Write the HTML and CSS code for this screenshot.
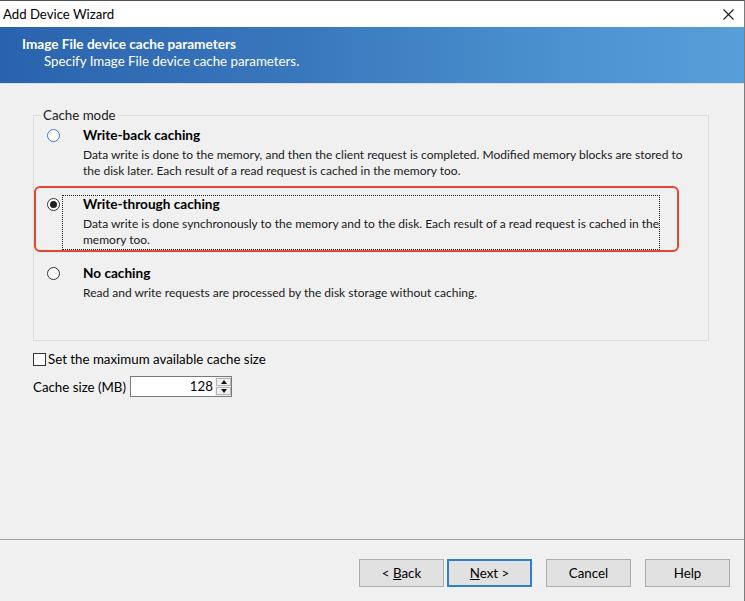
FILE: index.html
```html
<!DOCTYPE html>
<html lang="en">
  <head>
    <meta charset="UTF-8" />
    <meta name="viewport" content="width=device-width, initial-scale=1.0" />
    <title>Add Device Wizard</title>
    <link rel="stylesheet" href="styles.css">
  </head>

  <body>
    <div class="window">
      <div class="titlebar">
        <span class="title">Add Device Wizard</span>
        <svg class="close" width="11" height="11" viewBox="0 0 11 11">
          <path d="M0.5 0.5 L10.5 10.5 M10.5 0.5 L0.5 10.5" stroke="#1a1a1a" stroke-width="1.1" fill="none" />
        </svg>
      </div>

      <div class="header">
        <div class="header-title">Image File device cache parameters</div>
        <div class="header-sub">Specify Image File device cache parameters.</div>
      </div>

      <div class="main">
        <fieldset class="group">
          <legend>Cache mode</legend>

          <div class="option">
            <span class="radio radio-hover"></span>
            <div class="option-body">
              <div class="option-title">Write-back caching</div>
              <div class="option-desc">Data write is done to the memory, and then the client request is completed. Modified memory blocks are stored to<br>the disk later. Each result of a read request is cached in the memory too.</div>
            </div>
          </div>

          <div class="option option-selected">
            <span class="highlight"></span>
            <span class="radio checked"></span>
            <div class="option-body focused">
              <div class="option-title">Write-through caching</div>
              <div class="option-desc">Data write is done synchronously to the memory and to the disk. Each result of a read request is cached in the<br>memory too.</div>
            </div>
          </div>

          <div class="option">
            <span class="radio"></span>
            <div class="option-body">
              <div class="option-title">No caching</div>
              <div class="option-desc">Read and write requests are processed by the disk storage without caching.</div>
            </div>
          </div>
        </fieldset>

        <label class="check-row">
          <span class="checkbox"></span>
          <span>Set the maximum available cache size</span>
        </label>

        <div class="size-row">
          <span>Cache size (MB)</span>
          <div class="spin">
            <div class="spin-value">128</div>
            <div class="spin-buttons">
              <span class="spin-btn"><span class="arrow-up"></span></span>
              <span class="spin-btn"><span class="arrow-down"></span></span>
            </div>
          </div>
        </div>
      </div>

      <div class="footer">
        <button class="btn">&lt; <u>B</u>ack</button>
        <button class="btn btn-default"><u>N</u>ext &gt;</button>
        <button class="btn btn-gap">Cancel</button>
        <button class="btn btn-gap">Help</button>
      </div>
    </div>
  </body>
</html>
```

FILE: styles.css
```css
* {
  margin: 0;
  padding: 0;
  box-sizing: border-box;
}

body {
  font-family: "Lato", "Liberation Sans", sans-serif;
  font-size: 13.3px;
  color: #000;
  background-color: #f0f0f0;
}

.window {
  width: 745px;
  height: 601px;
  display: flex;
  flex-direction: column;
  border-top: 1px solid #505050;
  border-right: 1px solid #7c7c7c;
  background-color: #f0f0f0;
}

.titlebar {
  height: 26px;
  background-color: #fff;
  display: flex;
  align-items: center;
  justify-content: space-between;
  padding: 0 10px 0 3px;
}

.title {
  font-size: 13.2px;
}

.close {
  display: block;
}

.header {
  height: 57px;
  padding: 9px 0 0 22px;
  color: #fff;
  background: linear-gradient(to right, #2a63ad 0%, #3977bd 40%, #4d95d1 80%, #569fd8 100%);
  border-bottom: 1px solid #d7dfe8;
}

.header-title {
  font-weight: bold;
  font-size: 13.6px;
  line-height: 17px;
}

.header-sub {
  line-height: 17px;
  padding-left: 22px;
}

.main {
  flex: 1;
  padding: 23px 35px 0 33px;
}

.group {
  border: 1px solid #dcdcdc;
  padding: 3px 0 37px 0;
}

.group legend {
  margin-left: 7px;
  padding: 0 2px;
  line-height: 16px;
  color: #1a1a1a;
}

.option {
  position: relative;
  display: flex;
  align-items: flex-start;
  margin-bottom: 14px;
}

.option:last-child {
  margin-bottom: 0;
}

.radio {
  width: 13px;
  height: 13px;
  margin: 3px 2px 0 13px;
  border: 1px solid #333;
  border-radius: 50%;
  background-color: #fff;
  flex-shrink: 0;
  display: flex;
  align-items: center;
  justify-content: center;
}

.radio-hover {
  border-color: #2f7fc9;
}

.radio.checked::after {
  content: "";
  width: 7px;
  height: 7px;
  border-radius: 50%;
  background-color: #1f1f1f;
}

.option-body {
  border: 1px dotted transparent;
  padding: 0 0 1px 20px;
  white-space: nowrap;
  font-size: 12px;
}

.option-body.focused {
  border-color: #222;
}

.option-title {
  font-weight: bold;
  font-size: 13.6px;
  line-height: 16px;
  margin-bottom: 4px;
}

.option-desc {
  line-height: 16px;
  color: #1a1a1a;
}

/* red annotation frame around the selected option */
.highlight {
  position: absolute;
  left: 0;
  top: -9px;
  width: 645px;
  height: 66px;
  border: 2.5px solid #e2472d;
  border-radius: 6px;
  pointer-events: none;
}

.check-row {
  display: flex;
  align-items: center;
  gap: 2px;
  margin-top: 10px;
  line-height: 16px;
}

.checkbox {
  width: 13px;
  height: 13px;
  border: 1px solid #333;
  background-color: #fff;
}

.size-row {
  display: flex;
  align-items: center;
  gap: 4px;
  margin-top: 9px;
}

.spin {
  display: flex;
  height: 21px;
  border: 1px solid #7a7a7a;
  background-color: #fff;
}

.spin-value {
  width: 84px;
  text-align: right;
  padding-right: 2px;
  line-height: 19px;
}

.spin-buttons {
  width: 16px;
  display: flex;
  flex-direction: column;
  gap: 1px;
  padding: 1px 0 1px 1px;
  background-color: #f0f0f0;
}

.spin-btn {
  flex: 1;
  border: 1px solid #b5b5b5;
  background-color: #f0f0f0;
  display: flex;
  align-items: center;
  justify-content: center;
}

.arrow-up {
  border-left: 3px solid transparent;
  border-right: 3px solid transparent;
  border-bottom: 4px solid #111;
}

.arrow-down {
  border-left: 3px solid transparent;
  border-right: 3px solid transparent;
  border-top: 4px solid #111;
}

.footer {
  height: 62px;
  border-top: 1px solid #a0a0a0;
  display: flex;
  justify-content: flex-end;
  align-items: flex-start;
  padding: 19px 14px 0 0;
  gap: 3px;
}

.btn {
  width: 85px;
  height: 28px;
  font-family: inherit;
  font-size: 13.3px;
  color: #000;
  background-color: #e1e1e1;
  border: 1px solid #adadad;
  cursor: pointer;
}

.btn-default {
  border: 2px solid #2f7fc9;
}

.btn-gap {
  margin-left: 11px;
}

.btn:focus {
  outline: none;
}
```
